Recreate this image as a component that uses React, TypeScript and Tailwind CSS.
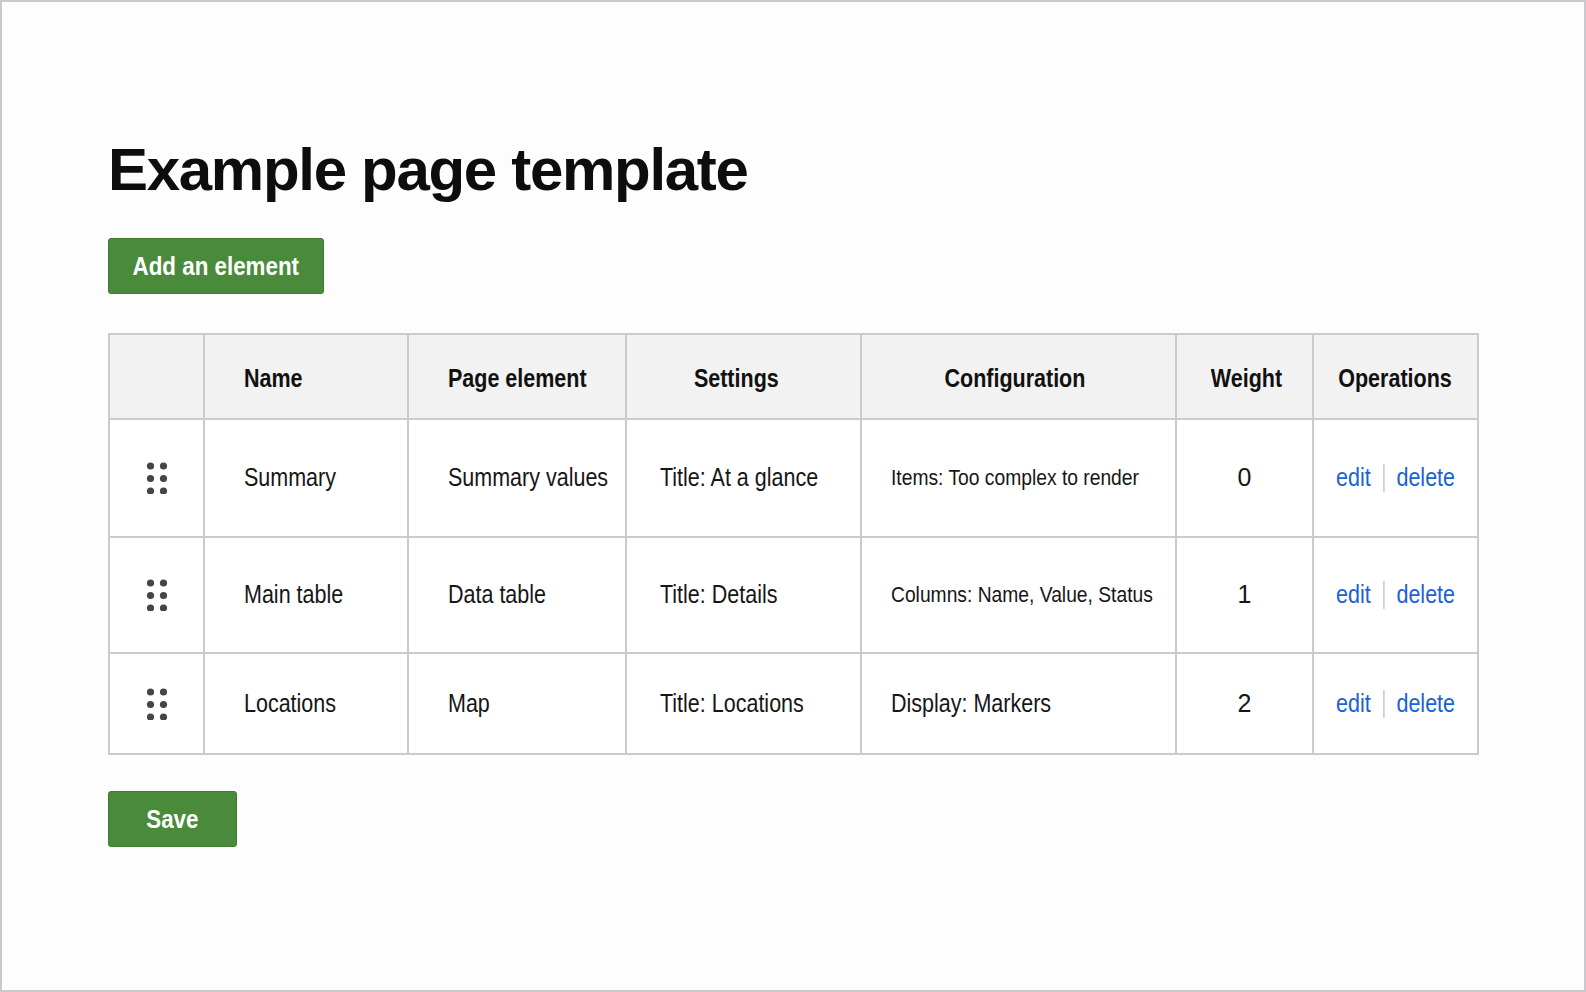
import React from 'react'

interface Row {
  name: string
  element: string
  settings: string
  config: string
  small?: boolean
  weight: number
  height: string
}

const rows: Row[] = [
  { name: 'Summary', element: 'Summary values', settings: 'Title: At a glance', config: 'Items: Too complex to render', small: true, weight: 0, height: 'h-[118px]' },
  { name: 'Main table', element: 'Data table', settings: 'Title: Details', config: 'Columns: Name, Value, Status', small: true, weight: 1, height: 'h-[116px]' },
  { name: 'Locations', element: 'Map', settings: 'Title: Locations', config: 'Display: Markers', weight: 2, height: 'h-[101px]' },
]

// no condensed face is installed, so squeeze Liberation Sans a little
function Cond({ children, left }: { children: React.ReactNode; left?: boolean }) {
  return <span className={left ? 'inline-block origin-left scale-x-[0.86]' : 'inline-block origin-center scale-x-[0.86]'}>{children}</span>
}

function DragHandle() {
  return (
    <svg width="22" height="32" viewBox="0 0 22 32" className="mx-auto block" aria-hidden>
      {[4, 16.5, 29].map((cy) =>
        [4.5, 17.5].map((cx) => <circle key={`${cx}-${cy}`} cx={cx} cy={cy} r="3.6" fill="#454545" />)
      )}
    </svg>
  )
}

const cell = 'border-2 border-[#cbcbcb]'

export default function App() {
  return (
    <div className="h-[992px] w-[1586px] overflow-hidden border-2 border-[#c9c9cc] bg-[#fdfdfd] font-['Liberation_Sans',Arial,sans-serif] text-[#161616]">
      <div className="pl-[106px] pt-[138px]">
        <h1 className="text-[60px] font-bold leading-none tracking-[-1.3px] text-[#0d0d0d]">Example page template</h1>

        <button className="mt-[38px] h-[56px] w-[216px] rounded-[3px] border border-[#3f7a31] bg-[#4a8a3b] text-[26px] font-bold text-white">
          <Cond>Add an element</Cond>
        </button>

        <table className={`mt-[39px] w-[1369px] table-fixed border-collapse whitespace-nowrap text-[25px] ${cell}`}>
          <colgroup>
            <col className="w-[95px]" />
            <col className="w-[204px]" />
            <col className="w-[218px]" />
            <col className="w-[235px]" />
            <col className="w-[315px]" />
            <col className="w-[137px]" />
            <col className="w-[165px]" />
          </colgroup>
          <thead>
            <tr className="h-[85px] bg-[#f2f2f2] text-[#111]">
              <th className={cell} />
              <th className={`${cell} pl-[39px] pt-[4px] text-left font-bold`}><Cond left>Name</Cond></th>
              <th className={`${cell} pl-[39px] pt-[4px] text-left font-bold`}><Cond left>Page element</Cond></th>
              <th className={`${cell} pr-[14px] pt-[4px] text-center font-bold`}><Cond>Settings</Cond></th>
              <th className={`${cell} pr-[8px] pt-[4px] text-center font-bold`}><Cond>Configuration</Cond></th>
              <th className={`${cell} pl-[4px] pt-[4px] text-center font-bold`}><Cond>Weight</Cond></th>
              <th className={`${cell} pr-[2px] pt-[4px] text-center font-bold`}><Cond>Operations</Cond></th>
            </tr>
          </thead>
          <tbody>
            {rows.map((row) => (
              <tr key={row.name} className={`${row.height} bg-white`}>
                <td className={`${cell} text-center align-middle`}>
                  <DragHandle />
                </td>
                <td className={`${cell} pl-[39px]`}><Cond left>{row.name}</Cond></td>
                <td className={`${cell} pl-[39px]`}><Cond left>{row.element}</Cond></td>
                <td className={`${cell} pl-[33px]`}><Cond left>{row.settings}</Cond></td>
                <td className={`${cell} pl-[29px] ${row.small ? 'text-[22.4px]' : ''}`}><Cond left>{row.config}</Cond></td>
                <td className={`${cell} text-center`}>{row.weight}</td>
                <td className={cell}>
                  <div className="flex origin-center scale-x-[0.86] items-center justify-center text-[#1a62d6]">
                    <a href="#" className="pr-[14px]">edit</a>
                    <span className="h-[28px] w-[2px] bg-[#cfcfcf]" />
                    <a href="#" className="pl-[14px]">delete</a>
                  </div>
                </td>
              </tr>
            ))}
          </tbody>
        </table>

        <button className="mt-[36px] h-[56px] w-[129px] rounded-[3px] border border-[#3f7a31] bg-[#4a8a3b] text-[26px] font-bold text-white">
          <Cond>Save</Cond>
        </button>
      </div>
    </div>
  )
}
